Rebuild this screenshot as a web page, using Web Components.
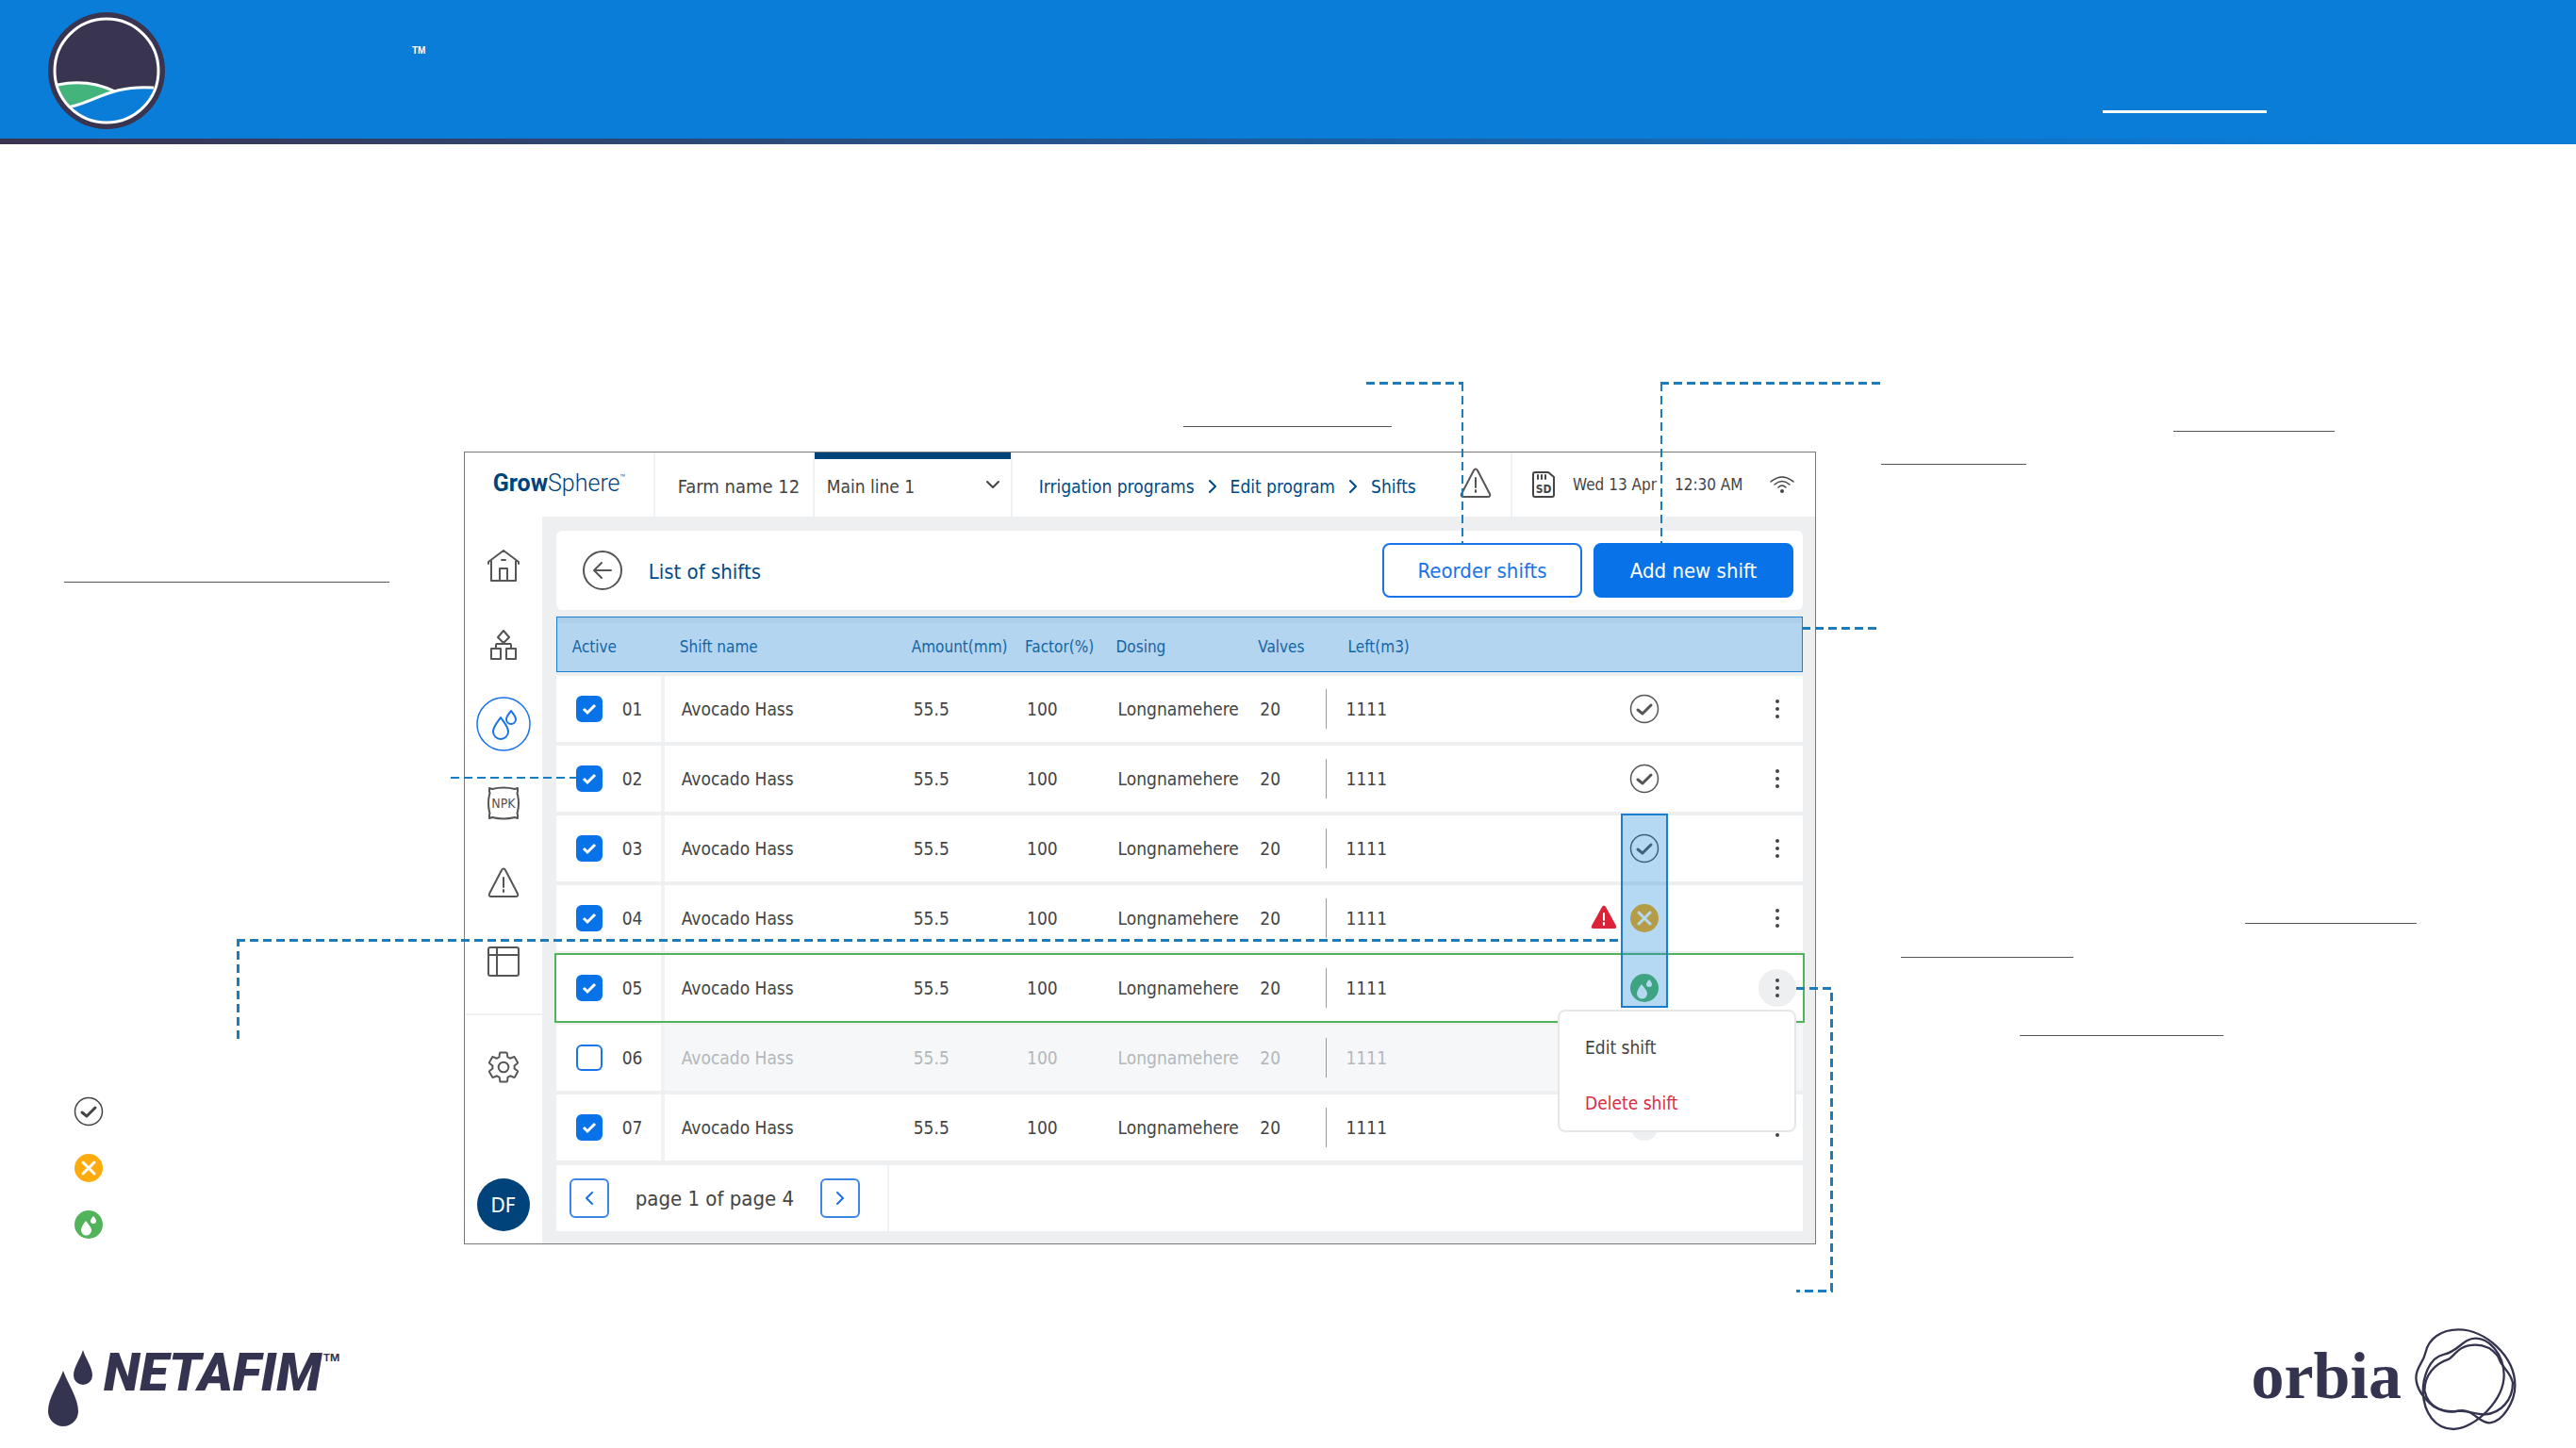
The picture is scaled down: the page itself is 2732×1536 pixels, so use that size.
<!DOCTYPE html>
<html lang="en">
<head>
    <meta charset="UTF-8">
    <meta name="viewport" content="width=device-width, initial-scale=1.0">
    <title>GrowSphere - List of shifts</title>
    <style>
        body {
            margin: 0;
            min-height: 100vh;
            display: flex;
            flex-direction: column;
            background: #fff;
            color: #444;
            font-family: "DejaVu Sans Condensed", "DejaVu Sans", sans-serif;
            font-size: 19px;
        }
    </style>
</head>
<body>
    <page-header></page-header>
    <guide-stage>
        <status-legend slot="side"></status-legend>
        <app-window>
            <top-bar slot="top"></top-bar>
            <side-nav slot="nav"></side-nav>
            <list-header>List of shifts</list-header>
            <shift-table></shift-table>
            <page-nav page="1" pages="4"></page-nav>
        </app-window>
    </guide-stage>
    <page-footer></page-footer>

    <script>
        const icons = {
            home: `<svg width="34" height="34" viewBox="0 0 34 34"><path d="M1 15v-2L17 1l16 12v2M4 12v21h26V12M13 33V20h8v13M15 11h4"/></svg>`,
            nodes: `<svg width="30" height="32" viewBox="0 0 30 32"><path d="M15 1l6 7-6 6-6-6zM15 14v1M7 20v-4q0-1 1-1h14q1 0 1 1v4M2 20h10v11H2zM18 20h10v11H18z"/></svg>`,
            drops: `<svg width="58" height="58" viewBox="0 0 58 58"><circle cx="29" cy="29" r="28" stroke-width="1.5"/><path d="M26 22c4 6 8 10 8 15a8 8 0 0 1-16 0c0-5 4-9 8-15zM37 15c3 4 5 6 5 9a5 5 0 0 1-10 0c0-3 2-5 5-9z"/></svg>`,
            npk: `<svg width="34" height="36" viewBox="0 0 34 36"><path d="M2 2l3 1q12-3 24 0l3-1v4q-1 1 0 3 2 9 0 18-1 2 0 3v4l-3-1q-12 3-24 0l-3 1v-4q1-1 0-3-2-9 0-18 1-2 0-3z"/><text x="17" y="23" text-anchor="middle" font-size="14" fill="currentColor" stroke="none">NPK</text></svg>`,
            warning: `<svg width="34" height="32" viewBox="0 0 34 32"><path d="M15 3q2-3 4 0l13 25q1 3-2 3H4q-3 0-2-3zM17 11v10M17 24v2"/></svg>`,
            board: `<svg width="34" height="32" viewBox="0 0 34 32"><path d="M3 1h28q2 0 2 2v26q0 2-2 2H3q-2 0-2-2V3q0-2 2-2zM1 9h32M10 1v30"/></svg>`,
            gear: `<svg width="34" height="34" viewBox="1.5 1.5 21 21"><g stroke-width="1.2"><path d="M19.1 12.9c.1-.3.1-.6.1-.9s0-.6-.1-.9l2-1.6c.2-.2.3-.4.2-.6l-2-3.4c-.1-.2-.3-.3-.6-.2l-2.4 1c-.5-.4-1-.7-1.6-.9l-.4-2.6c0-.2-.2-.4-.5-.4h-3.8c-.2 0-.4.2-.5.4l-.3 2.6c-.6.2-1.1.5-1.6.9l-2.4-1c-.2-.1-.5 0-.6.2L2.7 8.900c-.1.2 0 .5.2.6l2 1.6c-.1.3-.1.6-.1.9s0 .6.1.9l-2 1.6c-.2.2-.3.4-.2.6l2 3.4c.1.2.3.3.6.2l2.4-1c.5.4 1 .7 1.6.9l.4 2.6c0 .2.2.4.5.4h3.8c.2 0 .4-.2.5-.4l.3-2.6c.6-.2 1.1-.5 1.6-.9l2.4 1c.2.1.5 0 .6-.2l1.9-3.4c.1-.2.1-.4-.1-.6z"/><circle cx="12" cy="12" r="3.3"/></g></svg>`,
            back: `<svg width="44" height="44" viewBox="0 0 44 44"><circle cx="22" cy="22" r="20"/><path d="M31 22H14M21 14l-8 8 8 8"/></svg>`,
            down: `<svg width="16" height="10" viewBox="0 0 16 10"><path d="M2 2l6 6 6-6"/></svg>`,
            right: `<svg width="8" height="14" viewBox="0 0 8 14"><path d="M1 1l6 6-6 6"/></svg>`,
            left: `<svg width="8" height="14" viewBox="0 0 8 14"><path d="M7 1L1 7l6 6"/></svg>`,
            sd: `<svg width="24" height="28" viewBox="0 0 24 28"><path d="M3 1h14l6 5v19q0 2-2 2H3q-2 0-2-2V3q0-2 2-2zM6 4v4M10 4v4M14 4v4"/><text x="12" y="23" text-anchor="middle" font-size="12" font-weight="bold" fill="currentColor" stroke="none">SD</text></svg>`,
            wifi: `<svg width="26" height="18" viewBox="0 0 26 18"><g stroke-width="1.5"><path d="M1 6q12-10 24 0M5 9q8-7 16 0M9 12q4-4 8 0"/></g><circle cx="13" cy="16" r="1" fill="currentColor"/></svg>`,
            dots: `<svg width="6" height="22" viewBox="0 0 6 22"><g fill="currentColor" stroke="none"><circle cx="3" cy="3" r="2"/><circle cx="3" cy="11" r="2"/><circle cx="3" cy="19" r="2"/></g></svg>`,
            alert: `<svg width="28" height="30" viewBox="0 0 28 30"><path d="M12 4q2-3 4 0l11 20q1 3-2 3H3q-3 0-2-3z" fill="#dc2237" stroke="none"/><path d="M14 11v7M14 21v2" stroke="#fff"/></svg>`,
            ready: `<svg width="32" height="32" viewBox="0 0 32 32"><circle cx="16" cy="16" r="14.5" stroke-width="1.5"/><path d="M9 17l5 4 9-9" stroke-width="3"/></svg>`,
            stopped: `<svg width="32" height="32" viewBox="0 0 32 32"><circle cx="16" cy="16" r="15" fill="#ffab0b" stroke="none"/><path d="M10 10l12 12M22 10L10 22" stroke="#fff" stroke-width="3"/></svg>`,
            running: `<svg width="32" height="32" viewBox="0 0 32 32"><circle cx="16" cy="16" r="15" fill="#53b35b" stroke="none"/><path d="M13 12c3 4 6 7 6 10a5 5 0 0 1-11 0c0-3 2-6 5-10zM21 7c2 2 3 4 3 5a3 3 0 0 1-6 0c0-1 1-3 3-5z" fill="#fff" stroke="none"/></svg>`,
            idle: `<svg width="32" height="32" viewBox="0 0 32 32"><circle cx="16" cy="16" r="14" fill="#eeeff0" stroke="none"/></svg>`
        };

        // Line icon, coloured by the text colour around it
        class UiIcon extends HTMLElement {
            constructor() {
                super();
                this.attachShadow({ mode: "open" });
            }

            connectedCallback() {
                this.shadowRoot.innerHTML = `
                    <style>
                        :host { display: inline-flex; flex: none; }
                        svg {
                            display: block;
                            fill: none;
                            stroke: currentColor;
                            stroke-width: 2;
                            stroke-linecap: round;
                            stroke-linejoin: round;
                        }
                    </style>
                    ${icons[this.getAttribute("name")]}
                `;
            }
        }

        class PageHeader extends HTMLElement {
            constructor() {
                super();
                this.attachShadow({ mode: "open" });
                this.shadowRoot.innerHTML = `
                    <style>
                        :host {
                            display: flex;
                            align-items: flex-start;
                            box-sizing: border-box;
                            height: 153px;
                            padding: 13px 12% 0 51px;
                            color: #fff;
                            background:
                                linear-gradient(90deg, #3b3350, #0a7dd8 92%) bottom / 100% 6px no-repeat,
                                #0a7dd8;
                        }
                        svg { display: block; }
                        sup {
                            margin: 34px auto 0 262px;
                            font: bold 10px/14px "Liberation Sans", sans-serif;
                        }
                        hr {
                            width: 174px;
                            height: 3px;
                            margin: 104px 0 0;
                            border: 0;
                            background: #fff;
                        }
                    </style>
                    <svg width="124" height="124" viewBox="0 0 124 124">
                        <circle cx="62" cy="62" r="62" fill="#393550"/>
                        <path d="M10 77Q42 70 72 84L24 100Q14 90 10 77z" fill="#43b57c"/>
                        <path d="M24 100C50 95 66 77 112 80Q104 116 62 116 40 116 24 100z" fill="#0a7dd8"/>
                        <g fill="none" stroke="#fff" stroke-width="3">
                            <path d="M10 77Q42 70 71 84M24 100C50 95 66 77 112 80"/>
                            <circle cx="62" cy="62" r="55"/>
                        </g>
                    </svg>
                    <sup>TM</sup>
                    <hr>
                `;
            }
        }

        // Guide area: legend column, app window, and the callouts drawn over both
        class GuideStage extends HTMLElement {
            constructor() {
                super();
                this.attachShadow({ mode: "open" });
                this.shadowRoot.innerHTML = `
                    <style>
                        :host {
                            position: relative;
                            display: grid;
                            grid-template-columns: 18% 52.5% 1fr;
                            padding: 326px 0 63px;
                        }
                        .side { align-self: end; }
                        .callouts {
                            position: absolute;
                            inset: 0;
                            width: 100%;
                            height: 100%;
                            fill: none;
                            stroke: #1a7dc0;
                            stroke-width: 3;
                            stroke-dasharray: 9 5;
                            pointer-events: none;
                        }
                        .callouts path { vector-effect: non-scaling-stroke; }
                        .thin { stroke-width: 2; }
                        .rules {
                            stroke: #555;
                            stroke-width: 1;
                            stroke-dasharray: none;
                            shape-rendering: crispEdges;
                        }
                    </style>
                    <div class="side"><slot name="side"></slot></div>
                    <slot></slot>
                    <svg class="callouts" viewBox="0 153 2732 1230" preserveAspectRatio="none" aria-hidden="true">
                        <path d="M1449 406.5H1552"/>
                        <path class="thin" d="M1551 406V578"/>
                        <path d="M1994 406.5H1761"/>
                        <path class="thin" d="M1762 406V577"/>
                        <path d="M1911 666.5H1995"/>
                        <path class="thin" d="M478 825H611"/>
                        <path d="M252.5 1102V997"/>
                        <path d="M251 997.5H1718"/>
                        <path d="M1905 1048.5H1942.5V1369.5H1905"/>
                        <path class="rules" d="M1255 452.5H1476M2305 457.5H2476M1995 492.5H2149M68 617.5H413M2381 979.5H2563M2016 1015.5H2199M2142 1098.5H2358"/>
                    </svg>
                `;
            }
        }

        class StatusLegend extends HTMLElement {
            constructor() {
                super();
                this.attachShadow({ mode: "open" });
                this.shadowRoot.innerHTML = `
                    <style>
                        :host { display: block; padding: 0 0 5px 78px; }
                        ul {
                            display: flex;
                            flex-direction: column;
                            gap: 28px;
                            margin: 0;
                            padding: 0;
                            list-style: none;
                        }
                        li { display: flex; }
                    </style>
                    <ul>
                        <li><ui-icon name="ready"></ui-icon></li>
                        <li><ui-icon name="stopped"></ui-icon></li>
                        <li><ui-icon name="running"></ui-icon></li>
                    </ul>
                `;
            }
        }

        class AppWindow extends HTMLElement {
            constructor() {
                super();
                this.attachShadow({ mode: "open" });
                this.shadowRoot.innerHTML = `
                    <style>
                        :host {
                            display: block;
                            border: 1px solid #77797c;
                            background: #fff;
                        }
                        .body { display: grid; grid-template-columns: 82px 1fr; }
                        main { padding: 15px 13px 13px 15px; background: #eeeff1; }
                    </style>
                    <slot name="top"></slot>
                    <div class="body">
                        <slot name="nav"></slot>
                        <main><slot></slot></main>
                    </div>
                `;
            }
        }

        class TopBar extends HTMLElement {
            constructor() {
                super();
                this.attachShadow({ mode: "open" });
                this.shadowRoot.innerHTML = `
                    <style>
                        :host { display: block; background: #fff; }
                        header { display: flex; height: 68px; white-space: nowrap; }
                        header > * { box-sizing: border-box; display: flex; flex: none; align-items: center; }
                        .brand {
                            width: 202px;
                            padding: 0 0 4px 30px;
                            border-right: 2px solid #f0f1f2;
                            color: #00437b;
                            font: 300 25px "Roboto", sans-serif;
                            text-decoration: none;
                        }
                        .brand b { font-weight: 700; }
                        .brand sup { align-self: flex-start; margin-top: 19px; font-size: 10px; line-height: 16px; }
                        .farm { width: 167px; padding: 4px 0 0 24px; font-size: 20px; }
                        .line {
                            position: relative;
                            width: 212px;
                            border: solid #f0f1f2;
                            border-width: 0 2px;
                        }
                        .line::before {
                            content: "";
                            position: absolute;
                            inset: 0 0 auto;
                            height: 7px;
                            background: #00437b;
                        }
                        select {
                            width: 100%;
                            height: 100%;
                            padding: 4px 0 0 13px;
                            border: 0;
                            appearance: none;
                            background: none;
                            color: inherit;
                            font: inherit;
                        }
                        .line ui-icon { position: absolute; right: 11px; pointer-events: none; }
                        nav { gap: 14px; padding: 4px 0 0 28px; color: #004a86; }
                        nav a { color: inherit; text-decoration: none; }
                        nav ui-icon { margin: 0 1px; }
                        .alarm { margin-left: auto; padding: 0 20px 4px 0; border-right: 2px solid #f0f1f2; color: #555; }
                        .state { width: 321px; gap: 19px; padding-left: 21px; font-size: 17px; }
                        .state ui-icon:last-child { margin-left: 9px; }
                    </style>
                    <header>
                        <a class="brand" href="#"><b>Grow</b>Sphere<sup>™</sup></a>
                        <div class="farm">Farm name 12</div>
                        <div class="line">
                            <select aria-label="Main line"><option>Main line 1</option></select>
                            <ui-icon name="down"></ui-icon>
                        </div>
                        <nav>
                            <a href="#">Irrigation programs</a><ui-icon name="right"></ui-icon>
                            <a href="#">Edit program</a><ui-icon name="right"></ui-icon>
                            <a href="#">Shifts</a>
                        </nav>
                        <div class="alarm"><ui-icon name="warning"></ui-icon></div>
                        <div class="state">
                            <ui-icon name="sd"></ui-icon>
                            <span>Wed 13 Apr</span>
                            <span>12:30 AM</span>
                            <ui-icon name="wifi"></ui-icon>
                        </div>
                    </header>
                `;
            }
        }

        class SideNav extends HTMLElement {
            constructor() {
                super();
                this.attachShadow({ mode: "open" });
                const items = ["home", "nodes", "drops", "npk", "warning", "board"];
                this.shadowRoot.innerHTML = `
                    <style>
                        :host {
                            box-sizing: border-box;
                            display: flex;
                            flex-direction: column;
                            align-items: center;
                            padding: 10px 0 13px;
                            background: #fff;
                        }
                        a {
                            display: flex;
                            align-items: center;
                            justify-content: center;
                            width: 100%;
                            height: 84px;
                            color: #555;
                        }
                        a.current { color: #1a73e8; }
                        hr { width: 100%; height: 2px; margin: 13px 0; border: 0; background: #f0f1f2; }
                        button {
                            width: 56px;
                            height: 56px;
                            margin-top: auto;
                            padding: 0;
                            border: 0;
                            border-radius: 50%;
                            background: #00437b;
                            color: #fff;
                            font: inherit;
                            font-size: 22px;
                        }
                    </style>
                    ${items.map(name => `<a href="#" class="${name === "drops" ? "current" : ""}"><ui-icon name="${name}"></ui-icon></a>`).join("")}
                    <hr>
                    <a href="#"><ui-icon name="gear"></ui-icon></a>
                    <button>DF</button>
                `;
            }
        }

        class ListHeader extends HTMLElement {
            constructor() {
                super();
                this.attachShadow({ mode: "open" });
                this.shadowRoot.innerHTML = `
                    <style>
                        :host {
                            box-sizing: border-box;
                            display: flex;
                            align-items: center;
                            gap: 12px;
                            height: 84px;
                            margin-bottom: 3px;
                            padding: 0 10px 0 27px;
                            border-radius: 6px;
                            background: #fff;
                        }
                        h1 {
                            margin: 2px auto 0 15px;
                            color: #004a86;
                            font-size: 22px;
                            font-weight: normal;
                        }
                        button {
                            width: 212px;
                            height: 58px;
                            padding: 0;
                            border: 2px solid #1a73e8;
                            border-radius: 8px;
                            background: #fff;
                            color: #1a73e8;
                            font: inherit;
                            font-size: 22px;
                        }
                        .primary { border-color: #0872e8; background: #0872e8; color: #fff; }
                        .back { width: 44px; height: 44px; border: 0; background: none; color: #555; }
                    </style>
                    <button class="back" aria-label="Back"><ui-icon name="back"></ui-icon></button>
                    <h1><slot></slot></h1>
                    <button>Reorder shifts</button>
                    <button class="primary">Add new shift</button>
                `;
            }
        }

        class ShiftTable extends HTMLElement {
            constructor() {
                super();
                this.attachShadow({ mode: "open" });
                const shifts = [
                    { id: "01", status: "ready" },
                    { id: "02", status: "ready" },
                    { id: "03", status: "ready", marked: true },
                    { id: "04", status: "stopped", alert: true },
                    { id: "05", status: "running", open: true },
                    { id: "06", off: true },
                    { id: "07", status: "idle" }
                ];
                const row = s => `
                    <tr class="${s.open ? "open" : ""} ${s.off ? "off" : ""}">
                        <td><label><input type="checkbox" ${s.off ? "" : "checked"}>${s.id}</label></td>
                        <td>Avocado Hass</td>
                        <td>55.5</td>
                        <td>100</td>
                        <td>Longnamehere</td>
                        <td>20</td>
                        <td class="rest">1111</td>
                        <td class="status">
                            <div>
                                ${s.alert ? `<ui-icon name="alert"></ui-icon>` : ""}
                                ${s.status ? `<ui-icon name="${s.status}"></ui-icon>` : ""}
                            </div>
                            ${s.marked ? `<span class="mark"></span>` : ""}
                        </td>
                        <td class="more">
                            ${s.off ? "" : `<button aria-label="Options"><ui-icon name="dots"></ui-icon></button>`}
                            ${s.open ? `<shift-menu></shift-menu>` : ""}
                        </td>
                    </tr>`;
                this.shadowRoot.innerHTML = `
                    <style>
                        :host { display: block; }
                        table {
                            width: 100%;
                            table-layout: fixed;
                            border-collapse: separate;
                            border-spacing: 0 4px;
                        }
                        th {
                            box-sizing: border-box;
                            height: 59px;
                            padding: 4px 0 0 16px;
                            border: solid #1a7dd0;
                            border-width: 1px 0;
                            background: linear-gradient(#abcfea 6px, #b3d5f0 6px);
                            color: #1565a5;
                            font-size: 17px;
                            font-weight: normal;
                            text-align: left;
                        }
                        th:first-child { border-left-width: 1px; }
                        th:last-child { border-right-width: 1px; }
                        th:nth-child(7) { padding-left: 24px; }
                        td {
                            position: relative;
                            box-sizing: border-box;
                            height: 70px;
                            padding: 0 0 0 18px;
                            background: #fff;
                        }
                        td:first-child { padding-left: 21px; border-right: 4px solid #f1f2f3; }
                        label { display: flex; align-items: center; gap: 21px; }
                        input {
                            appearance: none;
                            box-sizing: border-box;
                            width: 28px;
                            height: 28px;
                            margin: 0;
                            border: 2px solid #1a73e8;
                            border-radius: 6px;
                        }
                        input:checked {
                            border-color: #0872e8;
                            background: #0872e8 url('data:image/svg+xml,<svg xmlns="http://www.w3.org/2000/svg" viewBox="0 0 24 24"><path d="M6 12l4 4 8-8" fill="none" stroke="white" stroke-width="3"/></svg>');
                        }
                        .rest { padding-left: 22px; }
                        .rest::before {
                            content: "";
                            position: absolute;
                            left: 0;
                            top: 14px;
                            width: 1px;
                            height: 42px;
                            background: #999;
                        }
                        .status div { display: flex; justify-content: flex-end; gap: 13px; padding-right: 30px; color: #555; }
                        .mark {
                            position: absolute;
                            z-index: 1;
                            top: -2px;
                            left: 38px;
                            box-sizing: border-box;
                            width: 50px;
                            height: 206px;
                            border: 2px solid #1a7dd0;
                            background: rgba(10, 125, 216, 0.3);
                        }
                        .more { padding: 0; }
                        .more button {
                            display: flex;
                            align-items: center;
                            justify-content: center;
                            width: 40px;
                            height: 40px;
                            margin: 0 7px 0 auto;
                            padding: 0;
                            border: 0;
                            border-radius: 50%;
                            background: none;
                            color: #444;
                        }
                        .open { outline: 3px solid #53b35b; outline-offset: -1px; }
                        .open .more button { background: #eeeff1; }
                        .off td:not(:first-child) { background: #f5f7f9; color: #b4b7ba; }
                        shift-menu { position: absolute; z-index: 2; top: 58px; right: 7px; }
                    </style>
                    <table>
                        <colgroup>
                            <col style="width: 8.7%"><col style="width: 18.6%"><col style="width: 9.1%">
                            <col style="width: 7.3%"><col style="width: 11.4%"><col style="width: 6.6%">
                            <col style="width: 20.8%"><col style="width: 8.3%"><col style="width: 9.2%">
                        </colgroup>
                        <thead>
                            <tr>
                                <th>Active</th><th>Shift name</th><th>Amount(mm)</th><th>Factor(%)</th><th>Dosing</th>
                                <th>Valves</th><th>Left(m3)</th><th></th><th></th>
                            </tr>
                        </thead>
                        <tbody>${shifts.map(row).join("")}</tbody>
                    </table>
                `;
            }
        }

        class ShiftMenu extends HTMLElement {
            constructor() {
                super();
                this.attachShadow({ mode: "open" });
                this.shadowRoot.innerHTML = `
                    <style>
                        :host {
                            box-sizing: border-box;
                            display: flex;
                            flex-direction: column;
                            width: 253px;
                            height: 130px;
                            padding-top: 8px;
                            border: 2px solid #e6e7e8;
                            border-radius: 8px;
                            background: #fff;
                        }
                        button {
                            height: 59px;
                            padding: 0 27px;
                            border: 0;
                            background: none;
                            color: #444;
                            font: inherit;
                            text-align: left;
                        }
                        .danger { color: #dc2b45; }
                    </style>
                    <button>Edit shift</button>
                    <button class="danger">Delete shift</button>
                `;
            }
        }

        class PageNav extends HTMLElement {
            constructor() {
                super();
                this.attachShadow({ mode: "open" });
                const page = this.getAttribute("page");
                const pages = this.getAttribute("pages");
                this.shadowRoot.innerHTML = `
                    <style>
                        :host { display: block; margin-top: 1px; background: #fff; }
                        div {
                            box-sizing: border-box;
                            display: flex;
                            align-items: center;
                            gap: 28px;
                            width: 353px;
                            height: 70px;
                            padding-left: 14px;
                            border-right: 2px solid #f0f1f2;
                            font-size: 22px;
                        }
                        button {
                            display: flex;
                            align-items: center;
                            justify-content: center;
                            width: 42px;
                            height: 42px;
                            padding: 0;
                            border: 2px solid #3c86e6;
                            border-radius: 6px;
                            background: none;
                            color: #1a73e8;
                        }
                    </style>
                    <div>
                        <button aria-label="Previous page"><ui-icon name="left"></ui-icon></button>
                        <span>page ${page} of page ${pages}</span>
                        <button aria-label="Next page"><ui-icon name="right"></ui-icon></button>
                    </div>
                `;
            }
        }

        class PageFooter extends HTMLElement {
            constructor() {
                super();
                this.attachShadow({ mode: "open" });
                this.shadowRoot.innerHTML = `
                    <style>
                        :host {
                            display: flex;
                            justify-content: space-between;
                            margin-top: auto;
                            padding: 0 62px 18px 51px;
                            color: #353450;
                        }
                        div { display: flex; align-items: flex-start; }
                        svg { display: block; }
                        .netafim { padding-top: 24px; }
                        .netafim b { margin: -4px 2px 0 9px; font: italic 900 56px/56px "Roboto", sans-serif; }
                        .netafim sup { margin-top: 1px; font: bold 11px/14px "Inter", sans-serif; }
                        .orbia { gap: 13px; }
                        .orbia b { padding-top: 12px; font: bold 70px/80px "Liberation Serif", serif; }
                    </style>
                    <div class="netafim">
                        <svg width="50" height="82" viewBox="0 0 50 82" fill="currentColor">
                            <path d="M16 22c5 14 16 29 16 43a16 16 0 0 1-32 0c0-14 11-29 16-43zM37 0c3 10 10 18 10 27a10 10 0 0 1-20 0c0-9 7-17 10-27z"/>
                        </svg>
                        <b>NETAFIM</b><sup>TM</sup>
                    </div>
                    <div class="orbia">
                        <b>orbia</b>
                        <svg width="110" height="110" viewBox="603 79 330 330" fill="none" stroke="currentColor" stroke-width="7">
                            <path d="M745 86C690 86 650 115 640 160 632 195 610 205 610 240 612 280 640 310 665 330 700 350 725 350 745 345 790 335 810 385 845 383 890 378 925 310 925 265 925 170 830 86 745 86z"/>
                            <path d="M800 114C760 114 745 155 700 165 650 175 632 240 632 285 635 350 670 403 730 403 800 400 890 310 890 230 888 160 840 114 800 114z"/>
                            <path d="M800 135C750 135 740 160 715 180 670 195 637 230 637 280 650 345 710 350 745 345 780 345 800 357 830 356 880 352 918 310 918 255 905 210 885 215 870 170 850 145 825 135 800 135z"/>
                        </svg>
                    </div>
                `;
            }
        }

        // Register the custom elements
        customElements.define("ui-icon", UiIcon);
        customElements.define("page-header", PageHeader);
        customElements.define("guide-stage", GuideStage);
        customElements.define("status-legend", StatusLegend);
        customElements.define("app-window", AppWindow);
        customElements.define("top-bar", TopBar);
        customElements.define("side-nav", SideNav);
        customElements.define("list-header", ListHeader);
        customElements.define("shift-menu", ShiftMenu);
        customElements.define("shift-table", ShiftTable);
        customElements.define("page-nav", PageNav);
        customElements.define("page-footer", PageFooter);
    </script>
</body>
</html>
